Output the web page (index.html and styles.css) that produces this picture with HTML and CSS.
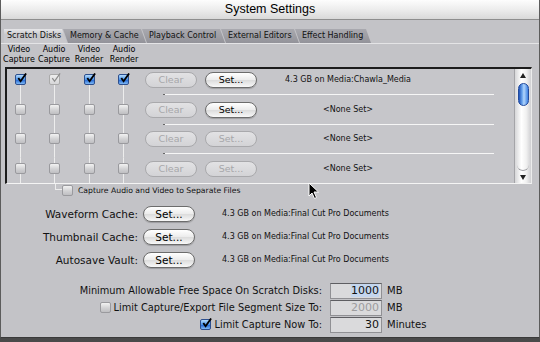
FILE: index.html
```html
<!DOCTYPE html>
<html lang="en">
<head>
    <meta charset="UTF-8">
    <title>System Settings</title>
    <link rel="stylesheet" href="styles.css">
</head>
<body>
    <div class="window">
        <div class="titlebar">System Settings</div>
        <div class="tabs">
            <div class="tab active">Scratch Disks</div>
            <div class="tab">Memory &amp; Cache</div>
            <div class="tab">Playback Control</div>
            <div class="tab">External Editors</div>
            <div class="tab">Effect Handling</div>
        </div>

        <div class="heads">
            <div>Video<br>Capture</div>
            <div>Audio<br>Capture</div>
            <div>Video<br>Render</div>
            <div>Audio<br>Render</div>
        </div>

        <div class="list">
            <div class="rows">
                <div class="row">
                    <div class="checks">
                        <span class="cell"><i class="cb on"><svg viewBox="0 0 12 12"><path d="M2.5 5.5 L5 9 L11 0.5"/></svg></i></span>
                        <span class="cell"><i class="cb dis"><svg viewBox="0 0 12 12"><path d="M2.5 5.5 L5 9 L11 0.5"/></svg></i></span>
                        <span class="cell"><i class="cb on"><svg viewBox="0 0 12 12"><path d="M2.5 5.5 L5 9 L11 0.5"/></svg></i></span>
                        <span class="cell"><i class="cb on"><svg viewBox="0 0 12 12"><path d="M2.5 5.5 L5 9 L11 0.5"/></svg></i></span>
                    </div>
                    <div class="row-body">
                        <div class="row-main">
                            <button class="btn off">Clear</button>
                            <button class="btn">Set...</button>
                            <span class="path">4.3 GB on Media:Chawla_Media</span>
                        </div>
                        <div class="rule"></div>
                    </div>
                </div>
                <div class="row">
                    <div class="checks">
                        <span class="cell"><i class="cb"></i></span>
                        <span class="cell"><i class="cb"></i></span>
                        <span class="cell"><i class="cb"></i></span>
                        <span class="cell"><i class="cb"></i></span>
                    </div>
                    <div class="row-body">
                        <div class="row-main">
                            <button class="btn off">Clear</button>
                            <button class="btn">Set...</button>
                            <span class="path">&lt;None Set&gt;</span>
                        </div>
                        <div class="rule"></div>
                    </div>
                </div>
                <div class="row">
                    <div class="checks">
                        <span class="cell"><i class="cb"></i></span>
                        <span class="cell"><i class="cb"></i></span>
                        <span class="cell"><i class="cb"></i></span>
                        <span class="cell"><i class="cb"></i></span>
                    </div>
                    <div class="row-body">
                        <div class="row-main">
                            <button class="btn off">Clear</button>
                            <button class="btn off">Set...</button>
                            <span class="path">&lt;None Set&gt;</span>
                        </div>
                        <div class="rule"></div>
                    </div>
                </div>
                <div class="row">
                    <div class="checks">
                        <span class="cell"><i class="cb"></i></span>
                        <span class="cell"><i class="cb"></i></span>
                        <span class="cell"><i class="cb"></i></span>
                        <span class="cell"><i class="cb"></i></span>
                    </div>
                    <div class="row-body">
                        <div class="row-main">
                            <button class="btn off">Clear</button>
                            <button class="btn off">Set...</button>
                            <span class="path">&lt;None Set&gt;</span>
                        </div>
                        <div class="rule"></div>
                    </div>
                </div>
            </div>
            <div class="scroll">
                <span class="arrow up"></span>
                <span class="thumb"></span>
                <span class="track-end"></span>
                <span class="arrow down"></span>
            </div>
        </div>

        <div class="sep">
            <span class="elbow"></span>
            <i class="cb"></i>
            <span class="sep-label">Capture Audio and Video to Separate Files</span>
        </div>

        <div class="mid">
            <div class="mrow">
                <span class="mlabel">Waveform Cache:</span>
                <button class="btn big">Set...</button>
                <span class="mpath">4.3 GB on Media:Final Cut Pro Documents</span>
            </div>
            <div class="mrow">
                <span class="mlabel">Thumbnail Cache:</span>
                <button class="btn big">Set...</button>
                <span class="mpath">4.3 GB on Media:Final Cut Pro Documents</span>
            </div>
            <div class="mrow">
                <span class="mlabel">Autosave Vault:</span>
                <button class="btn big">Set...</button>
                <span class="mpath">4.3 GB on Media:Final Cut Pro Documents</span>
            </div>
        </div>

        <div class="bottom">
            <div class="brow">
                <span class="blabel">Minimum Allowable Free Space On Scratch Disks:</span>
                <span class="field"><span class="sel">1000</span></span>
                <span class="unit">MB</span>
            </div>
            <div class="brow">
                <span class="blabel"><i class="cb"></i>Limit Capture/Export File Segment Size To:</span>
                <span class="field dim">2000</span>
                <span class="unit">MB</span>
            </div>
            <div class="brow">
                <span class="blabel"><i class="cb on"><svg viewBox="0 0 12 12"><path d="M2.5 5.5 L5 9 L11 0.5"/></svg></i>Limit Capture Now To:</span>
                <span class="field">30</span>
                <span class="unit">Minutes</span>
            </div>
        </div>

        <svg class="cursor" width="12" height="18" viewBox="0 0 12 18"><path d="M1 1 L1 14 L4 11 L6.5 16.5 L8.5 15.5 L6 10 L10.5 10 Z" fill="#000" stroke="#fff" stroke-width="1"/></svg>
    </div>
</body>
</html>
```

FILE: styles.css
```css
body {
    margin: 0;
    background: linear-gradient(#4a4a4a, #1e1e1e);
    font-family: "DejaVu Sans", sans-serif;
    color: #111;
}
.window {
    position: relative;
    width: 540px;
    height: 338px;
    box-sizing: border-box;
    background: #c3c3c7;
    border-left: 1px solid #5c5c5c;
    border-right: 1px solid #5c5c5c;
    border-bottom: 1px solid #3a3a3a;
    display: flex;
    flex-direction: column;
}
.titlebar {
    height: 20px;
    box-sizing: border-box;
    border-bottom: 1px solid #8e8e8e;
    background: linear-gradient(#fdfdfd, #ebebeb 55%, #d9d9d9);
    text-align: center;
    font-family: "Liberation Sans", sans-serif;
    font-size: 12.5px;
    line-height: 19px;
    color: #000;
}

/* tabs */
.tabs {
    display: flex;
    height: 14px;
    padding: 9px 0 0 3px;
    border-bottom: 1px solid #e4e4e6;
}
.tab {
    height: 14px;
    box-sizing: border-box;
    padding-left: 7px;
    margin-left: -4px;
    font-size: 8px;
    line-height: 14px;
    color: #111;
    background: linear-gradient(#a9a9af, #93939a);
    clip-path: polygon(0 0, calc(100% - 5px) 0, 100% 100%, 5px 100%);
}
.tab:nth-child(1) { width: 63px; margin-left: 0; }
.tab:nth-child(2) { width: 83px; }
.tab:nth-child(3) { width: 83px; }
.tab:nth-child(4) { width: 78px; }
.tab:nth-child(5) { width: 76px; }
.tab.active {
    z-index: 1;
    padding-left: 3px;
    background: linear-gradient(#e6e6e9, #c8c8cc 40%);
    clip-path: polygon(0 0, calc(100% - 5px) 0, 100% 100%, 0 100%);
}

/* column heads */
.heads {
    display: flex;
    gap: 1px;
    padding-left: 1px;
    margin-top: 1px;
    height: 20px;
    font-size: 8px;
    line-height: 10px;
    text-align: center;
    color: #000;
}
.heads div {
    width: 34px;
}

/* scratch disk list */
.list {
    display: flex;
    height: 117px;
    box-sizing: border-box;
    margin: 2px 7px 0 4px;
    background: #c6c6ca;
    border-top: 2px solid #1c1c1c;
    border-left: 2px solid #1c1c1c;
    border-right: 1px solid #ececec;
    border-bottom: 1px solid #f4f4f4;
    overflow: hidden;
}
.rows {
    flex: 1;
}
.row {
    display: flex;
    height: 29.5px;
}
.checks {
    display: flex;
    gap: 14.67px;
    padding-left: 3px;
    width: 127px;
    box-sizing: border-box;
}
.cell {
    width: 20px;
    display: flex;
    justify-content: center;
    padding-top: 5px;
    background: linear-gradient(#ededed, #ededed) no-repeat center / 1px 100%;
}
.row:first-child .cell {
    background-position: center bottom;
    background-size: 1px 14px;
}
.row-body {
    margin-left: 11px;
    padding-top: 3px;
}
.row-main {
    display: flex;
    gap: 8px;
    height: 16px;
}
.rule {
    margin: 6px 0 0 18px;
    width: 329px;
    height: 1px;
    background: #f6f6f6;
    border-left: 2px solid #666;
}
.path {
    width: 166px;
    text-align: center;
    font-size: 8px;
    line-height: 16px;
}

/* checkboxes */
.cb {
    position: relative;
    display: inline-block;
    width: 11px;
    height: 11px;
    box-sizing: border-box;
    border: 1px solid #9a9a9e;
    border-radius: 2px;
    background: linear-gradient(#f2f2f2, #d2d2d4 55%, #bfbfc2);
    flex: none;
}
.cb svg {
    position: absolute;
    left: 0;
    top: -2px;
    width: 11px;
    height: 11px;
}
.cb path {
    fill: none;
    stroke: #000;
    stroke-width: 2;
}
.cb.on {
    border-color: #2d4f8e;
    background: linear-gradient(#b6dcfb, #4b95ec 50%, #2468d4 55%, #7fb9f4);
}
.cb.dis {
    border-color: #aaa;
    background: linear-gradient(#eee, #d6d6d8);
}
.cb.dis path {
    stroke: #8c8c8c;
    stroke-width: 1.4;
}

/* aqua buttons */
.btn {
    width: 52px;
    height: 16px;
    padding: 0;
    font-family: "DejaVu Sans", sans-serif;
    font-size: 9.5px;
    line-height: 14px;
    color: #000;
    border: 1px solid #6c6c6c;
    border-radius: 8px;
    background: linear-gradient(#ffffff, #ececec 48%, #dcdcdc 52%, #f8f8f8);
    box-shadow: 0 1px 1px rgba(0, 0, 0, 0.2);
}
.btn.off {
    color: #a7a7aa;
    border-color: #a9a9ac;
    background: linear-gradient(#e2e2e4, #d3d3d6);
    box-shadow: none;
}
.btn.big {
    font-size: 10.5px;
    margin-left: 5px;
}

/* scrollbar */
.scroll {
    width: 16px;
    display: flex;
    flex-direction: column;
    align-items: center;
    border-left: 1px solid #a4a4a8;
    background: linear-gradient(90deg, #d6d6d8, #ffffff 40%, #f1f1f1 70%, #cfcfd2);
}
.arrow {
    width: 0;
    height: 0;
    border-left: 3px solid transparent;
    border-right: 3px solid transparent;
}
.arrow.up {
    margin: 4px 0 5px;
    border-bottom: 5px solid #222;
}
.arrow.down {
    margin: 4px 0 3px;
    border-top: 5px solid #222;
}
.thumb {
    width: 11px;
    height: 23px;
    box-sizing: border-box;
    border: 1px solid #224a9c;
    border-radius: 6px;
    background: linear-gradient(90deg, #1f53b8, #6aa5ee 35%, #b3d6fc 55%, #3c80e2);
}
.track-end {
    flex: 1;
    width: 12px;
    border-bottom: 1px solid #a0a0a4;
    border-radius: 0 0 6px 6px;
}

/* separate files */
.sep {
    display: flex;
    align-items: center;
    height: 12px;
}
.elbow {
    align-self: flex-start;
    width: 7px;
    height: 6px;
    margin-left: 54px;
    box-sizing: border-box;
    border-left: 1px solid #ededed;
    border-bottom: 1px solid #ededed;
}
.sep-label {
    margin-left: 5px;
    font-size: 7.7px;
}

/* cache locations */
.mid {
    margin-top: 6px;
}
.mrow {
    display: flex;
    align-items: center;
    height: 23px;
}
.mlabel {
    width: 137px;
    text-align: right;
    font-size: 10.5px;
}
.mpath {
    margin-left: 27px;
    font-size: 8px;
}

/* limits */
.bottom {
    margin-top: 11px;
}
.brow {
    display: flex;
    align-items: center;
    height: 17px;
}
.blabel {
    width: 321px;
    display: flex;
    align-items: center;
    justify-content: flex-end;
    gap: 3px;
    font-size: 9.8px;
}
.field {
    width: 52px;
    height: 16px;
    box-sizing: border-box;
    margin-left: 8px;
    padding-right: 2px;
    text-align: right;
    font-size: 11px;
    line-height: 14px;
    background: #dadadc;
    border: 1px solid #909094;
    border-top-color: #5e5e62;
}
.field.dim {
    color: #9c9c9e;
}
.sel {
    background: #c4d6ee;
}
.unit {
    margin-left: 5px;
    font-size: 10px;
}

.cursor {
    position: absolute;
    left: 307px;
    top: 182px;
}
```
